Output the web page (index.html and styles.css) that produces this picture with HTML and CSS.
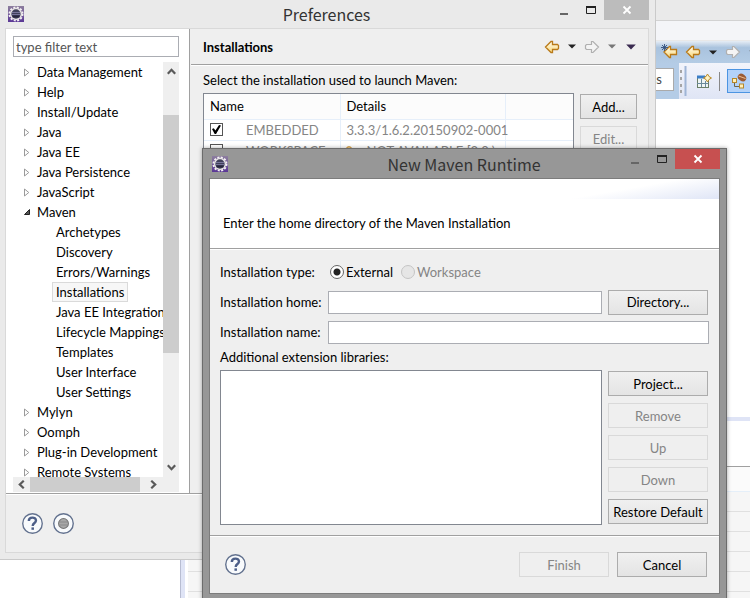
FILE: index.html
```html
<!DOCTYPE html>
<html lang="en">
<head>
<meta charset="utf-8">
<title>New Maven Runtime</title>
<link rel="stylesheet" href="styles.css">
</head>
<body>
<svg class="defs" aria-hidden="true">
  <defs>
    <linearGradient id="gold" x1="0" y1="0" x2="0" y2="1"><stop offset="0" stop-color="#fffdf0"/><stop offset="1" stop-color="#fbd97a"/></linearGradient>
    <linearGradient id="violet" x1="0" y1="0" x2="0" y2="1"><stop offset="0" stop-color="#8d7f9e"/><stop offset="1" stop-color="#5a3796"/></linearGradient>
  </defs>
  <symbol id="gear" viewBox="0 0 16 16">
    <rect width="16" height="16" fill="url(#violet)"/>
    <circle cx="8" cy="8" r="6.500" fill="none" stroke="#f4f1f4" stroke-width="2" stroke-dasharray="2 1.400"/>
    <circle cx="8" cy="8" r="5.400" fill="#40405a" stroke="#e6e2e4" stroke-width="1.500"/>
    <path d="M4 6.500h8M3.500 8.500h9" stroke="#77749a"/>
    <path d="M4.500 10.500h7" stroke="#26243c" stroke-width="2"/>
  </symbol>
  <symbol id="back" viewBox="0 0 16 14">
    <path d="M1.500 7L7 1.500H8.500V4.500H13.500L14.500 5.500V8.500L13.500 9.500H8.500V12.500H7Z" fill="url(#gold)" stroke="#b97a1a" stroke-width="1.300"/>
  </symbol>
  <symbol id="forward" viewBox="0 0 16 14">
    <path d="M14.500 7L9 1.500H7.500V4.500H2.500L1.500 5.500V8.500L2.500 9.500H7.500V12.500H9Z" fill="#f4f4f4" stroke="#b0b0b0" stroke-width="1.200"/>
  </symbol>
  <symbol id="caret" viewBox="0 0 8 5"><path d="M0 0.500H8L4 4.500Z" fill="currentColor"/></symbol>
  <symbol id="closed" viewBox="0 0 6 9"><path d="M0.500 1V8L4.800 4.500Z" fill="#fff" stroke="#9a9a9a"/></symbol>
  <symbol id="open" viewBox="0 0 6 6"><path d="M5.500 0.500V5.500H0.500Z" fill="#555" stroke="#222"/></symbol>
  <symbol id="min" viewBox="0 0 10 10"><path d="M1 9H9" stroke="#666" stroke-width="2"/></symbol>
  <symbol id="max" viewBox="0 0 10 10"><path d="M0 2H10" stroke="#222" stroke-width="2"/><path d="M0.500 1V8.500H9.500V1" fill="none" stroke="#222"/></symbol>
  <symbol id="close" viewBox="0 0 10 10"><path d="M1.500 1.500L8.500 8.500M8.500 1.500L1.500 8.500" stroke="#fff" stroke-width="1.800"/></symbol>
  <symbol id="chev" viewBox="0 0 8 6"><path d="M0.700 5L4 1.500L7.300 5" fill="none" stroke="#5a5a5a" stroke-width="2"/></symbol>
  <symbol id="help" viewBox="0 0 20 20">
    <circle cx="10" cy="10" r="9.300" fill="#f8fafc" stroke="#62718e" stroke-width="1.300"/>
    <path d="M6.500 7.500C6.500 3.500 13.300 3.300 13.300 7.200C13.300 9.500 10.200 9.500 10.200 12.300" fill="none" stroke="#4d5f88" stroke-width="2.300"/>
    <rect x="9" y="13.700" width="2.400" height="2.300" fill="#4d5f88"/>
  </symbol>
  <symbol id="record" viewBox="0 0 20 20">
    <circle cx="10" cy="10" r="9.300" fill="#f8fafc" stroke="#62718e" stroke-width="1.300"/>
    <circle cx="10" cy="10" r="4.700" fill="#a8a8a8" stroke="#777"/>
    <path d="M6 8.500H14M6 11.500H14" stroke="#8a8a8a"/>
  </symbol>
</svg>

<main class="workbench">
  <div class="wb-title"></div>
  <div class="wb-menu"></div>
  <div class="wb-nav">
    <svg width="20" height="16" viewBox="0 0 20 16"><path d="M3 8L8.500 2.500H9.500V5.500H15.500V10.500H9.500V13.500H8.500Z" fill="url(#gold)" stroke="#b97a1a" stroke-width="1.300"/><path d="M3.500 0V7M0 3.500H7M1 1L6 6M6 1L1 6" stroke="#34517d" stroke-width="0.900"/></svg>
    <svg class="arrow"><use href="#back"/></svg>
    <svg class="caret dark"><use href="#caret"/></svg>
    <svg class="arrow"><use href="#forward"/></svg>
    <svg class="caret dim"><use href="#caret"/></svg>
  </div>
  <div class="wb-tools">
    <div class="wb-search"><span>ss</span></div>
    <div class="wb-perspectives">
      <svg width="10" height="32" viewBox="0 0 10 32"><path d="M1 5h2v3h-2zM1 12h2v3h-2zM1 19h2v3h-2zM1 25h2v3h-2z" fill="#a5a5a5"/><path d="M6.500 1V31" stroke="#9fb5d6" stroke-width="2"/></svg>
      <svg width="16" height="16" viewBox="0 0 16 16"><rect x="1.500" y="3.500" width="11" height="11" fill="#eef5f5" stroke="#6a7f68"/><path d="M1 4H9" stroke="#3b7ec8" stroke-width="3"/><path d="M5.500 6V14M1 10.500H12M9.500 8V14" stroke="#6a8a9a"/><path d="M11.500 1L13 3.500L15.500 5L13 6.500L11.500 9L10 6.500L7.500 5L10 3.500Z" fill="#fff3c4" stroke="#b98a2a"/></svg>
      <i class="wb-sep"></i>
      <button class="wb-active" aria-label="Java EE perspective"><svg width="16" height="16" viewBox="0 0 16 16"><path d="M3.500 9V13.500H8" fill="none" stroke="#6f6547"/><rect x="1.500" y="5.500" width="4" height="4" fill="#fff0b8" stroke="#b5872b"/><rect x="8.500" y="11" width="4" height="4" fill="#fff0b8" stroke="#b5872b"/><ellipse cx="11" cy="4.500" rx="4.500" ry="3.500" transform="rotate(35 11 4.500)" fill="#9a5b34"/><path d="M7.500 3L14.500 5.500" stroke="#f0bd90"/></svg></button>
    </div>
  </div>
  <div class="wb-editor"></div>
  <section class="wb-panel">
    <div class="wb-panel-bar"></div>
    <div class="wb-panel-head"></div>
    <div class="wb-rows"><i></i><i></i><i></i><i></i><i></i><i></i></div>
  </section>
</main>

<section class="window prefs" aria-label="Preferences">
  <header class="titlebar">
    <svg class="gear"><use href="#gear"/></svg>
    <h1>Preferences</h1>
    <div class="controls">
      <button aria-label="Minimize"><svg><use href="#min"/></svg></button>
      <button aria-label="Maximize"><svg><use href="#max"/></svg></button>
      <button class="close" aria-label="Close"><svg><use href="#close"/></svg></button>
    </div>
  </header>
  <div class="client">
    <div class="split">
      <nav class="sidebar">
        <input class="filter" type="text" placeholder="type filter text" aria-label="Filter">
        <div class="tree-box">
          <ul class="tree">
            <li><svg><use href="#closed"/></svg><span>Data Management</span></li>
            <li><svg><use href="#closed"/></svg><span>Help</span></li>
            <li><svg><use href="#closed"/></svg><span>Install/Update</span></li>
            <li><svg><use href="#closed"/></svg><span>Java</span></li>
            <li><svg><use href="#closed"/></svg><span>Java EE</span></li>
            <li><svg><use href="#closed"/></svg><span>Java Persistence</span></li>
            <li><svg><use href="#closed"/></svg><span>JavaScript</span></li>
            <li><svg class="opened"><use href="#open"/></svg><span>Maven</span></li>
            <li class="child"><span>Archetypes</span></li>
            <li class="child"><span>Discovery</span></li>
            <li class="child"><span>Errors/Warnings</span></li>
            <li class="child selected"><span>Installations</span></li>
            <li class="child"><span>Java EE Integration</span></li>
            <li class="child"><span>Lifecycle Mappings</span></li>
            <li class="child"><span>Templates</span></li>
            <li class="child"><span>User Interface</span></li>
            <li class="child"><span>User Settings</span></li>
            <li><svg><use href="#closed"/></svg><span>Mylyn</span></li>
            <li><svg><use href="#closed"/></svg><span>Oomph</span></li>
            <li><svg><use href="#closed"/></svg><span>Plug-in Development</span></li>
            <li><svg><use href="#closed"/></svg><span>Remote Systems</span></li>
          </ul>
          <div class="vbar"><svg><use href="#chev"/></svg><i></i><svg class="down"><use href="#chev"/></svg></div>
          <div class="hbar"><svg class="left"><use href="#chev"/></svg><i></i><svg class="right"><use href="#chev"/></svg></div>
        </div>
      </nav>
      <div class="page">
        <header class="page-head">
          <h2>Installations</h2>
          <div class="history">
            <svg class="arrow"><use href="#back"/></svg>
            <svg class="caret dark"><use href="#caret"/></svg>
            <svg class="arrow"><use href="#forward"/></svg>
            <svg class="caret dim"><use href="#caret"/></svg>
            <svg class="caret menu"><use href="#caret"/></svg>
          </div>
        </header>
        <p class="hint">Select the installation used to launch Maven:</p>
        <div class="installs">
          <div class="table-box">
            <table>
              <colgroup><col class="c-name"><col class="c-details"><col></colgroup>
              <thead><tr><th>Name</th><th>Details</th><th></th></tr></thead>
              <tbody>
                <tr><td><label><input type="checkbox" checked>EMBEDDED</label></td><td>3.3.3/1.6.2.20150902-0001</td><td></td></tr>
                <tr><td><label><input type="checkbox">WORKSPACE</label></td><td><span class="warn"><svg width="8" height="12" viewBox="0 0 8 12"><path d="M1.500 11V3.500Q4 0 6.500 3.500V11" fill="#fff1cc" stroke="#d9a550" stroke-width="1.500"/></svg>NOT AVAILABLE [3.0,)</span></td><td></td></tr>
              </tbody>
            </table>
          </div>
          <div class="stack">
            <button class="btn">Add...</button>
            <button class="btn" disabled>Edit...</button>
          </div>
        </div>
      </div>
    </div>
    <footer class="prefs-foot">
      <button class="round" aria-label="Help"><svg><use href="#help"/></svg></button>
      <button class="round" aria-label="Record"><svg><use href="#record"/></svg></button>
    </footer>
  </div>
</section>

<section class="window dialog" role="dialog" aria-label="New Maven Runtime">
  <header class="titlebar">
    <svg class="gear"><use href="#gear"/></svg>
    <h1>New Maven Runtime</h1>
    <div class="controls">
      <button aria-label="Minimize"><svg><use href="#min"/></svg></button>
      <button aria-label="Maximize"><svg><use href="#max"/></svg></button>
      <button class="close" aria-label="Close"><svg><use href="#close"/></svg></button>
    </div>
  </header>
  <form class="client">
    <div class="banner">Enter the home directory of the Maven Installation</div>
    <div class="form">
      <div class="field type">
        <span class="label">Installation type:</span>
        <label><input type="radio" name="type" checked>External</label>
        <label class="off"><input type="radio" name="type" disabled>Workspace</label>
      </div>
      <div class="field">
        <label class="label" for="home">Installation home:</label>
        <input type="text" id="home">
        <button type="button" class="btn wide">Directory...</button>
      </div>
      <div class="field">
        <label class="label" for="name">Installation name:</label>
        <input type="text" id="name">
      </div>
      <label class="list-label" for="libs">Additional extension libraries:</label>
      <div class="libs">
        <select id="libs" size="6"></select>
        <div class="stack">
          <button type="button" class="btn wide">Project...</button>
          <button type="button" class="btn wide" disabled>Remove</button>
          <button type="button" class="btn wide" disabled>Up</button>
          <button type="button" class="btn wide" disabled>Down</button>
          <button type="button" class="btn wide">Restore Default</button>
        </div>
      </div>
    </div>
    <footer class="dialog-foot">
      <button type="button" class="round" aria-label="Help"><svg><use href="#help"/></svg></button>
      <button type="button" class="btn end" disabled>Finish</button>
      <button type="button" class="btn end">Cancel</button>
    </footer>
  </form>
</section>
</body>
</html>
```

FILE: styles.css
```css
* { box-sizing: border-box; }
body {
  margin: 0;
  height: 100vh;
  position: relative;
  overflow: hidden;
  background: #fff;
  color: #000;
  font: 13px/20px Lato, "Noto Sans", sans-serif;
}
h1, h2, p, ul { margin: 0; padding: 0; }
button, input, select { font: inherit; color: inherit; margin: 0; }
svg { display: block; flex: none; }
.defs { position: absolute; width: 0; height: 0; }
.arrow { width: 16px; height: 14px; }
.caret { width: 8px; height: 5px; }
.dark { color: #222; }
.dim { color: #777; }

/* Workbench behind the windows */
.workbench { height: 100%; display: flex; flex-direction: column; }
.wb-title { height: 21px; background: #eaeaea; border-bottom: 1px solid #d2d2d2; }
.wb-menu { height: 20px; background: #f4f5f8; border-bottom: 1px solid #e8e8e8; }
.wb-nav {
  height: 22px;
  padding-left: 661px;
  display: flex;
  align-items: center;
  gap: 4px;
  background: linear-gradient(#e6edf5, #a9c3de 30%, #b4cce5);
}
.wb-nav .caret { margin: 0 4px; }
.wb-tools { height: 36px; padding-left: 640px; display: flex; background: #b4cce6; }
.wb-search {
  width: 35px;
  height: 23px;
  margin: 5px 5px 0 0;
  padding-right: 11px;
  display: flex;
  justify-content: flex-end;
  background: #fff;
  border: 1px solid #aaa;
  color: #444;
}
.wb-perspectives { flex: 1; display: flex; align-items: center; gap: 7px; background: linear-gradient(#f2f4fb, #dfe5f5); }
.wb-sep { width: 1px; height: 19px; background: #888; }
.wb-active {
  flex: 1;
  height: 24px;
  padding: 0 3px;
  background: #b3d2f9;
  border: 1px solid #4b94e2;
  border-right: 0;
}
.wb-editor { flex: 1; }
.wb-panel {
  height: 181px;
  margin-left: 180px;
  border-left: 1px solid #b8bdd2;
  display: flex;
  flex-direction: column;
  background: linear-gradient(90deg, #dfe4f6 4px, #fff 4px);
}
.wb-panel-bar { height: 50px; border-top: 4px solid #dfe4f6; border-bottom: 1px solid #a0a0a0; }
.wb-panel-head { height: 25px; margin-left: 7px; background: #fbfbfb; border-bottom: 1px solid #e5eff9; }
.wb-rows { flex: 1; margin-left: 7px; overflow: hidden; background: #f6f6f6; }
.wb-rows i { display: block; height: 20px; border-bottom: 1px solid #e0e0e0; }

/* Window frames */
.window { position: absolute; display: flex; flex-direction: column; }
.prefs {
  left: 0;
  top: 0;
  width: 656px;
  height: 560px;
  padding: 0 6px 6px 5px;
  background: #eaeaea;
  border: solid #cacaca;
  border-width: 0 1px 1px 0;
}
.dialog {
  left: 202px;
  top: 148px;
  width: 525px;
  height: 453px;
  padding: 0 6px 6px;
  background: #979797;
  border: 1px solid #6c6c6c;
  box-shadow: 0 0 4px rgba(0, 0, 0, 0.35);
}
.titlebar { height: 28px; position: relative; display: flex; align-items: center; flex: none; }
.dialog .titlebar { height: 29px; }
.titlebar h1 { flex: 1; margin-left: -20px; text-align: center; font: 400 16px/18px "Noto Sans CJK SC", "Noto Sans", sans-serif; color: #333; }
.gear { width: 16px; height: 16px; margin-left: 3px; }
.controls { align-self: flex-start; display: flex; margin-left: -99px; }
.controls button {
  width: 27px;
  height: 20px;
  padding: 0;
  display: grid;
  place-items: center;
  background: none;
  border: 0;
}
.controls svg { width: 10px; height: 10px; }
.controls .close { width: 45px; background: #bcbcbc; }
.dialog .close { background: #c75050; }
.client { flex: 1; min-height: 0; display: flex; flex-direction: column; background: #efefef; border: 1px solid #d9d9d9; }
.dialog .client { border-color: #7c7c7c; }

/* Preferences */
.split { flex: 1; min-height: 0; display: flex; border-bottom: 1px solid #a0a0a0; }
.sidebar { width: 184px; padding: 7px 10px 1px 7px; display: flex; flex-direction: column; gap: 5px; background: #fff; border-right: 1px solid #a0a0a0; }
input[type="text"] { height: 23px; min-width: 0; padding: 0 2px; background: #fff; border: 1px solid #abadb3; border-radius: 0; outline: 0; }
input.filter { height: 21px; flex: none; }
.filter::placeholder { color: #555; opacity: 1; }
.tree-box { flex: 1; min-height: 0; display: grid; grid-template: minmax(0, 1fr) 15px / minmax(0, 1fr) 16px; }
.tree { overflow: hidden; list-style: none; }
.tree li { height: 20px; padding-left: 11px; display: flex; align-items: center; white-space: nowrap; }
.tree li svg { width: 6px; height: 9px; margin-right: 5px; }
.tree li .opened { height: 6px; }
.tree li span { padding: 0 2px; }
.tree .child { padding-left: 39px; }
.tree .child span { padding: 0 3px; border: 1px solid transparent; line-height: 18px; }
.tree .selected span { background: #f7f7f7; border-color: #dadada; }
.vbar, .hbar { display: flex; align-items: center; background: #efefef; }
.vbar { flex-direction: column; grid-row: 1 / 3; grid-column: 2; padding: 6px 0 21px; }
.vbar svg, .hbar svg { width: 9px; height: 7px; }
.vbar i { width: 16px; height: 238px; margin: 40px 0 auto; background: #cdcdcd; }
.down { transform: rotate(180deg); }
.left { transform: rotate(-90deg); }
.right { transform: rotate(90deg); }
.hbar { padding: 0 5px 0 4px; }
.hbar i { width: 110px; height: 15px; margin: 0 auto 0 4px; background: #cdcdcd; }
.page { flex: 1; min-width: 0; }
.page-head {
  height: 36px;
  margin-left: 1px;
  padding: 0 12px;
  display: flex;
  align-items: center;
  justify-content: space-between;
  border-bottom: 1px solid #a0a0a0;
  box-shadow: 0 1px #fff;
}
.page-head h2 { font-size: 13px; font-weight: 700; }
.history { display: flex; align-items: center; gap: 8px; }
.history .menu { width: 10px; height: 6px; margin-left: 2px; color: #3a2a50; }
.hint { padding: 5px 13px 3px; }
.installs { display: flex; gap: 6px; padding: 0 11px 0 13px; }
.table-box { flex: 1; height: 390px; background: #fff; border: 1px solid #828790; }
table { width: 100%; table-layout: fixed; border-collapse: collapse; }
.c-name { width: 136px; }
.c-details { width: 165px; }
th { height: 25px; padding: 0 6px; text-align: left; font-weight: 400; background: #fcfcfc; }
td { height: 21px; padding: 0 6px; color: #858585; white-space: nowrap; }
th, td { border: solid #e6effa; border-width: 0 1px 1px 0; }
th:last-child, td:last-child { border-right: 0; }
td label { display: flex; align-items: center; gap: 23px; }
td input { appearance: none; width: 13px; height: 13px; border: 1px solid #555; background: #fff; }
td input:checked::before {
  content: "";
  display: block;
  width: 9px;
  height: 9px;
  margin: 1px;
  background: #000;
  clip-path: polygon(0 45%, 20% 35%, 38% 60%, 78% 0, 100% 5%, 45% 100%, 30% 100%);
}
.warn { display: flex; align-items: center; gap: 14px; }
.warn svg { margin-left: -2px; }
.stack { display: flex; flex-direction: column; gap: 7px; }
.installs .stack { width: 57px; padding-top: 1px; }
.btn {
  height: 25px;
  padding: 0;
  line-height: 20px;
  text-align: center;
  white-space: nowrap;
  background: linear-gradient(#f0f0f0, #e4e4e4);
  border: 1px solid #acacac;
  border-radius: 0;
}
.btn:disabled { color: #858585; background: #efefef; border-color: #d9d9d9; }
.wide { width: 100px; }
.round { width: 21px; height: 21px; padding: 0; background: none; border: 0; }
.round svg { width: 21px; height: 21px; }
.prefs-foot { height: 58px; padding: 0 16px; display: flex; align-items: center; gap: 10px; box-shadow: inset 0 1px #fff; }

/* New Maven Runtime dialog */
.banner {
  height: 70px;
  padding: 18px 13px 0;
  display: flex;
  align-items: center;
  border-bottom: 1px solid #a0a0a0;
  background: linear-gradient(170deg, #fff 45%, #dfe5f6) right top / 160px 20px no-repeat, #fff;
}
.form { flex: 1; padding: 10px 10px 0; display: flex; flex-direction: column; box-shadow: inset 0 1px #fff; }
.field { height: 30px; display: flex; align-items: center; }
.field .label { width: 108px; flex: none; white-space: nowrap; }
.field input[type="text"] { flex: 1; }
.field .btn { margin: 0 1px 0 6px; }
.field.type { height: 26px; margin-bottom: 2px; }
.type label { display: flex; align-items: center; gap: 2px; margin: 0 6px 0 2px; }
.type input { appearance: none; width: 14px; height: 14px; border: 1px solid #666; border-radius: 50%; background: #fff; }
.type input:checked { background: radial-gradient(circle, #222 3px, #fff 4px); }
.type .off { color: #858585; }
.type input:disabled { border-color: #c5c5c5; background: #e6e6e6; }
.list-label { margin-bottom: 3px; }
.libs { display: flex; gap: 6px; padding-right: 1px; }
.libs select { flex: 1; min-width: 0; height: 155px; background: #fff; border: 1px solid #828790; border-radius: 0; outline: 0; }
.libs .stack { padding-top: 1px; }
.dialog-foot { height: 58px; padding: 0 12px 0 15px; display: flex; align-items: center; gap: 8px; border-top: 1px solid #a0a0a0; box-shadow: inset 0 1px #fff; }
.dialog-foot .round { margin-right: auto; }
.end { width: 90px; }
```
